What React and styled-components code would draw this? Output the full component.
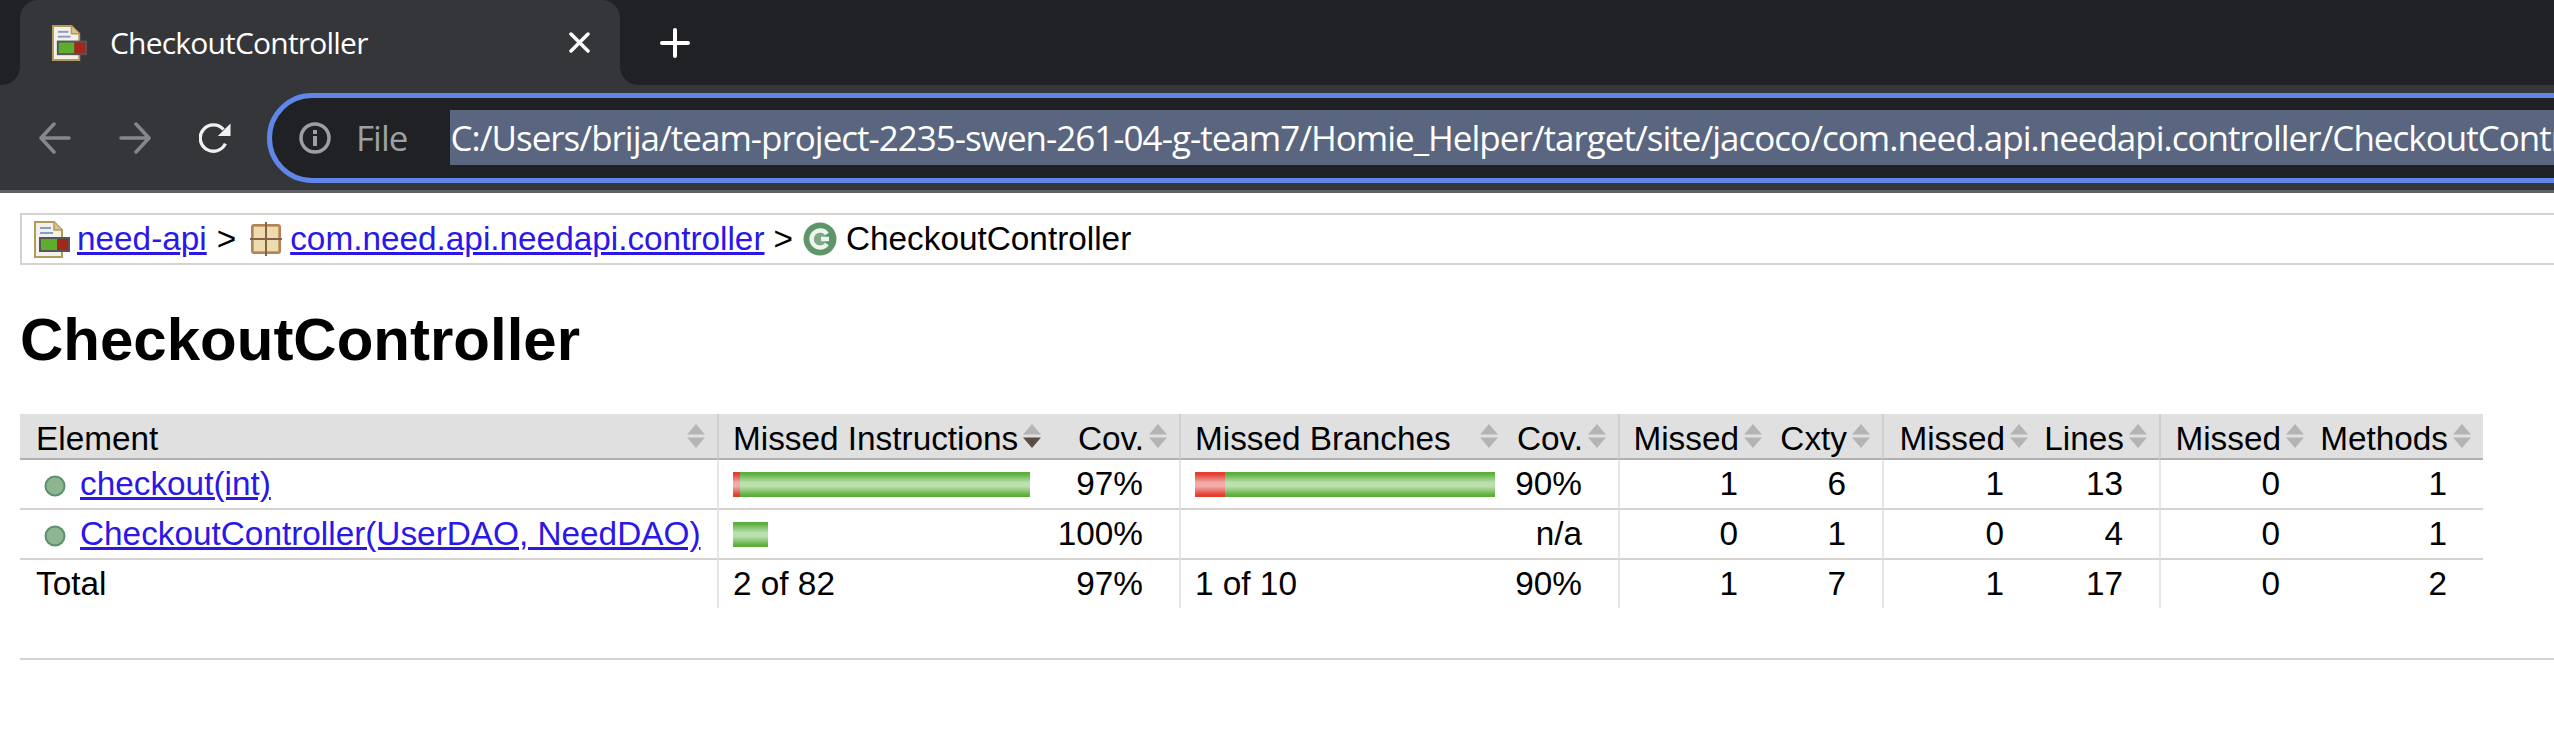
import React from 'react';
import styled, { createGlobalStyle } from 'styled-components';

const URL_TEXT = 'C:/Users/brija/team-project-2235-swen-261-04-g-team7/Homie_Helper/target/site/jacoco/com.need.api.needapi.controller/CheckoutController.html';

const GlobalStyle = createGlobalStyle`
    html, body {
        margin: 0;
        padding: 0;
        background: #fff;
    }
`;

const Page = styled.div`
    width: 2554px;
    height: 755px;
    overflow: hidden;
    display: flex;
    flex-direction: column;
    font-family: 'Liberation Sans', Arial, sans-serif;
`;

const TabStrip = styled.div`
    height: 85px;
    flex: none;
    display: flex;
    align-items: stretch;
    padding-left: 20px;
    background: #202124;
`;

const Tab = styled.div`
    width: 600px;
    position: relative;
    display: flex;
    align-items: center;
    padding: 0 30px 0 32px;
    box-sizing: border-box;
    background: #35363a;
    border-radius: 18px 18px 0 0;
    color: #fff;

    &::before, &::after {
        content: '';
        position: absolute;
        bottom: 0;
        width: 18px;
        height: 18px;
    }

    &::before {
        left: -18px;
        background: radial-gradient(circle at 0 0, #202124 17.5px, #35363a 18px);
    }

    &::after {
        right: -18px;
        background: radial-gradient(circle at 100% 0, #202124 17.5px, #35363a 18px);
    }
`;

const TabTitle = styled.span`
    flex: 1;
    margin-left: 23px;
    font-family: 'Open Sans', sans-serif;
    font-size: 30px;
    letter-spacing: -0.8px;
    white-space: nowrap;
`;

const NewTab = styled.div`
    display: flex;
    align-items: center;
    margin-left: 40px;
`;

const Toolbar = styled.div`
    height: 105px;
    flex: none;
    display: flex;
    align-items: center;
    padding-left: 39px;
    background: #35363a;
    border-bottom: 3px solid #5f6064;
`;

const NavButton = styled.div`
    width: 32px;
    height: 32px;
    flex: none;
    margin-right: ${(p) => p.$gap}px;
    display: flex;
`;

const Omnibox = styled.div`
    flex: none;
    width: 2400px;
    height: 90px;
    margin-left: 3px;
    box-sizing: border-box;
    display: flex;
    align-items: center;
    padding-left: 27px;
    background: #202124;
    border: 5px solid #5f86e8;
    border-radius: 45px;
`;

const SiteLabel = styled.span`
    margin-left: 25px;
    font-family: 'Open Sans', sans-serif;
    font-size: 35px;
    letter-spacing: -1px;
    color: #9aa0a6;
`;

const Divider = styled.span`
    width: 2px;
    height: 39px;
    margin-left: 21px;
    background: #6e7074;
`;

const UrlText = styled.span`
    margin-left: 22px;
    height: 55px;
    line-height: 55px;
    font-family: 'Open Sans', sans-serif;
    font-size: 35px;
    letter-spacing: -1px;
    white-space: nowrap;
    color: #fff;
    background: #5a6580;
`;

const Content = styled.div`
    padding: 20px 0 0 20px;
    color: #000;
    font-size: 33.33px;
`;

const Breadcrumb = styled.div`
    width: 2600px;
    height: 52px;
    box-sizing: border-box;
    display: flex;
    align-items: center;
    padding-left: 12px;
    border: 2px solid #d6d3ce;
    white-space: pre;
`;

const CrumbIcon = styled.svg`
    width: ${(p) => p.$w}px;
    height: ${(p) => p.$h}px;
    flex: none;
    margin-right: ${(p) => p.$gap}px;
    filter: ${(p) => (p.$soft ? 'blur(0.6px)' : 'none')};
`;

const Link = styled.a`
    color: #2a17e8;
    text-decoration: underline;
    white-space: nowrap;
`;

const Sep = styled.span`
    margin: 0 ${(p) => p.$after}px 0 ${(p) => p.$before}px;
`;

const Title = styled.h1`
    margin: 40px 0 0;
    height: 70px;
    line-height: 70px;
    font-size: 60px;
    font-weight: bold;
`;

const CoverageTable = styled.table`
    width: 2463px;
    margin-top: 39px;
    table-layout: fixed;
    border-collapse: separate;
    border-spacing: 0;
`;

const Head = styled.th`
    height: 43px;
    padding: 0 12px 0 ${(p) => (p.$group ? 14 : p.$first ? 16 : 5)}px;
    font-weight: normal;
    background: #e0e0e0;
    border-bottom: 2px solid #b0b0b0;
    border-left: ${(p) => (p.$group ? '2px solid #cfcfcf' : 'none')};
`;

const HeadInner = styled.div`
    display: flex;
    align-items: center;
    justify-content: ${(p) => (p.$left ? 'space-between' : 'flex-end')};
    gap: 5px;
    white-space: nowrap;
`;

const HeadLabel = styled.span`
    padding-top: 6px;
`;

const SortSvg = styled.svg`
    width: 18px;
    height: 24px;
    flex: none;
    filter: blur(0.4px);
`;

const Cell = styled.td`
    height: 48px;
    padding: 0 ${(p) => (p.$bar || p.$left ? 0 : 36)}px 0 ${(p) => (p.$group ? 14 : 0)}px;
    text-align: ${(p) => (p.$left ? 'left' : 'right')};
    white-space: nowrap;
    border-left: ${(p) => (p.$group ? '2px solid #e6e6e6' : 'none')};
    border-bottom: ${(p) => (p.$last ? 'none' : '2px solid #d6d3ce')};
`;

const NameCell = styled(Cell)`
    padding-left: 24px;
    text-align: left;
`;

const TotalCell = styled(Cell)`
    padding-left: 16px;
    text-align: left;
`;

const NameWrap = styled.div`
    display: flex;
    align-items: center;
    gap: 14px;
`;

const DotSvg = styled.svg`
    width: 22px;
    height: 22px;
    flex: none;
    margin-top: 3px;
    filter: blur(0.5px);
`;

const BarWrap = styled.div`
    display: flex;
    align-items: center;
    height: 25px;
`;

const Bar = styled.span`
    display: block;
    height: 25px;
    background: ${(p) => (p.$red
        ? 'linear-gradient(#e43c2f 0%, #e43c2f 8%, #f0aaa8 42%, #f0aaa8 58%, #e43c2f 92%, #e43c2f 100%)'
        : 'linear-gradient(#5aad38 0%, #5fb03e 8%, #b9e0ad 42%, #b9e0ad 58%, #5fb03e 92%, #5aad38 100%)')};
`;

const Footer = styled.div`
    margin-top: 50px;
    height: 0;
    border-top: 2px solid #d6d3ce;
`;

function SortIcon({ active }) {
    return (
        <SortSvg viewBox="0 0 18 24">
            <path d="M9 0 L18 10.5 L0 10.5 Z" fill="#b4b4b4" />
            <path d="M0 13.5 L18 13.5 L9 24 Z" fill={active ? '#584e46' : '#b4b4b4'} />
        </SortSvg>
    );
}

function SessionIcon({ w, h, gap, soft }) {
    return (
        <CrumbIcon $w={w} $h={h} $gap={gap} $soft={soft} viewBox="0 0 36 37">
            <path d="M1 1 H20 L28 9 V36 H1 Z" fill="#f4f1ea" stroke="#b29a5c" strokeWidth="2" />
            <path d="M20 1 V9 H28" fill="#d9c48a" stroke="#b29a5c" strokeWidth="1.5" />
            <rect x="6" y="6" width="11" height="2" fill="#8a9cc4" />
            <rect x="6" y="11" width="13" height="2" fill="#8a9cc4" />
            <rect x="5" y="16" width="31" height="15" fill="#55565a" />
            <rect x="7" y="18" width="16" height="11" fill="#5dae2e" />
            <rect x="23" y="18" width="11" height="11" fill="#a3271a" />
        </CrumbIcon>
    );
}

function PackageIcon() {
    return (
        <CrumbIcon $w={32} $h={34} $gap={8} $soft viewBox="0 0 32 34">
            <rect x="2" y="3" width="28" height="28" rx="2" fill="#c9a06e" stroke="#b0855a" strokeWidth="2" />
            <rect x="4" y="5" width="11" height="11" fill="#efdcae" />
            <rect x="17" y="5" width="11" height="11" fill="#efdcae" />
            <rect x="4" y="18" width="11" height="11" fill="#efdcae" />
            <rect x="17" y="18" width="11" height="11" fill="#efdcae" />
            <path d="M16 0 V34 M0 17 H32" stroke="#84614a" strokeWidth="2" />
        </CrumbIcon>
    );
}

function ClassIcon() {
    return (
        <CrumbIcon $w={34} $h={34} $gap={9} $soft viewBox="0 0 34 34">
            <circle cx="17" cy="17" r="16.5" fill="#5f9669" />
            <circle cx="17" cy="17" r="6" fill="#7fa885" />
            <path d="M24 12 A8.5 8.5 0 1 0 24 22 M18 17 H26" fill="none" stroke="#eef4ee" strokeWidth="4.5" />
        </CrumbIcon>
    );
}

function MethodDot() {
    return (
        <DotSvg viewBox="0 0 22 22">
            <circle cx="11" cy="11" r="9.5" fill="#8cb590" stroke="#5e8f6c" strokeWidth="2" />
        </DotSvg>
    );
}

const columns = [697, 336, 126, 331, 108, 156, 108, 158, 119, 157, 167];

const headers = [
    { label: 'Element', left: true, first: true },
    { label: 'Missed Instructions', left: true, group: true, active: true },
    { label: 'Cov.' },
    { label: 'Missed Branches', left: true, group: true },
    { label: 'Cov.' },
    { label: 'Missed', group: true },
    { label: 'Cxty' },
    { label: 'Missed', group: true },
    { label: 'Lines' },
    { label: 'Missed', group: true },
    { label: 'Methods' },
];

const rows = [
    { name: 'checkout(int)', bar: [7, 290], cov: '97%', branch: [30, 270], bcov: '90%', nums: [1, 6, 1, 13, 0, 1] },
    { name: 'CheckoutController(UserDAO, NeedDAO)', bar: [0, 35], cov: '100%', branch: null, bcov: 'n/a', nums: [0, 1, 0, 4, 0, 1] },
];

function Bars({ parts }) {
    if (!parts) return null;
    const [red, green] = parts;
    return (
        <BarWrap>
            {red > 0 && <Bar $red style={{ width: red }} />}
            <Bar style={{ width: green }} />
        </BarWrap>
    );
}

function Numbers({ nums, last }) {
    return nums.map((n, i) => (
        <Cell key={i} $group={i % 2 === 0} $last={last}>{n}</Cell>
    ));
}

function App() {
    return (
        <Page>
            <GlobalStyle />
            <TabStrip>
                <Tab>
                    <SessionIcon w={35} h={36} gap={0} />
                    <TabTitle>CheckoutController</TabTitle>
                    <svg width="21" height="21" viewBox="0 0 21 21">
                        <path d="M2 2 L19 19 M19 2 L2 19" stroke="#fff" strokeWidth="3.5" strokeLinecap="round" />
                    </svg>
                </Tab>
                <NewTab>
                    <svg width="30" height="30" viewBox="0 0 30 30">
                        <path d="M15 2 V28 M2 15 H28" stroke="#fff" strokeWidth="4" strokeLinecap="round" />
                    </svg>
                </NewTab>
            </TabStrip>
            <Toolbar>
                <NavButton $gap={48}>
                    <svg width="32" height="32" viewBox="0 0 32 32">
                        <path d="M30 16 H3 M15 2 L2 16 L15 30" fill="none" stroke="#86878a" strokeWidth="3.5" strokeLinecap="round" strokeLinejoin="round" />
                    </svg>
                </NavButton>
                <NavButton $gap={48}>
                    <svg width="32" height="32" viewBox="0 0 32 32">
                        <path d="M2 16 H29 M17 2 L30 16 L17 30" fill="none" stroke="#86878a" strokeWidth="3.5" strokeLinecap="round" strokeLinejoin="round" />
                    </svg>
                </NavButton>
                <NavButton $gap={33}>
                    <svg width="34" height="32" viewBox="0 0 34 32">
                        <path d="M28 22 A14 14 0 1 1 26 7" fill="none" stroke="#f1f1f1" strokeWidth="3.5" />
                        <path d="M33.5 0.5 V14 H20 Z" fill="#f1f1f1" />
                    </svg>
                </NavButton>
                <Omnibox>
                    <svg width="32" height="32" viewBox="0 0 32 32" style={{ flex: 'none' }}>
                        <circle cx="16" cy="16" r="14" fill="none" stroke="#9aa0a6" strokeWidth="3.5" />
                        <rect x="14" y="14" width="4" height="10" fill="#9aa0a6" />
                        <rect x="14" y="8" width="4" height="4" fill="#9aa0a6" />
                    </svg>
                    <SiteLabel>File</SiteLabel>
                    <Divider />
                    <UrlText>{URL_TEXT}</UrlText>
                </Omnibox>
            </Toolbar>
            <Content>
                <Breadcrumb>
                    <SessionIcon w={36} h={37} gap={7} soft />
                    <Link>need-api</Link>
                    <Sep $before={10} $after={14}>&gt;</Sep>
                    <PackageIcon />
                    <Link>com.need.api.needapi.controller</Link>
                    <Sep $before={9} $after={10}>&gt;</Sep>
                    <ClassIcon />
                    <span>CheckoutController</span>
                </Breadcrumb>
                <Title>CheckoutController</Title>
                <CoverageTable>
                    <colgroup>
                        {columns.map((w, i) => <col key={i} style={{ width: w }} />)}
                    </colgroup>
                    <thead>
                        <tr>
                            {headers.map((h, i) => (
                                <Head key={i} $group={h.group} $first={h.first}>
                                    <HeadInner $left={h.left}>
                                        <HeadLabel>{h.label}</HeadLabel>
                                        <SortIcon active={h.active} />
                                    </HeadInner>
                                </Head>
                            ))}
                        </tr>
                    </thead>
                    <tbody>
                        {rows.map((r) => (
                            <tr key={r.name}>
                                <NameCell>
                                    <NameWrap>
                                        <MethodDot />
                                        <Link>{r.name}</Link>
                                    </NameWrap>
                                </NameCell>
                                <Cell $group $bar $left><Bars parts={r.bar} /></Cell>
                                <Cell>{r.cov}</Cell>
                                <Cell $group $bar $left><Bars parts={r.branch} /></Cell>
                                <Cell>{r.bcov}</Cell>
                                <Numbers nums={r.nums} />
                            </tr>
                        ))}
                    </tbody>
                    <tfoot>
                        <tr>
                            <TotalCell $last>Total</TotalCell>
                            <Cell $group $left $last>2 of 82</Cell>
                            <Cell $last>97%</Cell>
                            <Cell $group $left $last>1 of 10</Cell>
                            <Cell $last>90%</Cell>
                            <Numbers nums={[1, 7, 1, 17, 0, 2]} last />
                        </tr>
                    </tfoot>
                </CoverageTable>
                <Footer />
            </Content>
        </Page>
    );
}

export default App;
